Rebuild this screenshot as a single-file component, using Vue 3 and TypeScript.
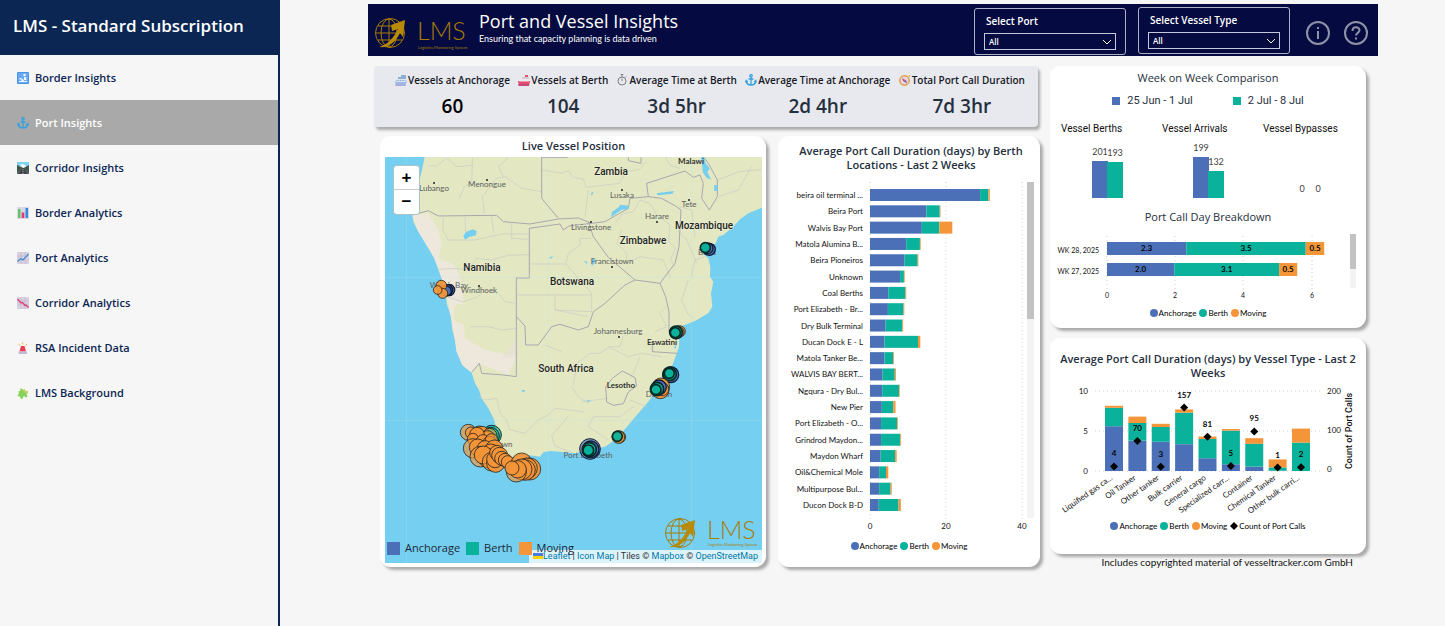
<script setup lang="ts">
import { computed, ref } from 'vue'

interface Stack { name: string; parts: number[] }
interface TypeStack extends Stack { calls: number }
interface Marker { x: number; y: number; r: number; kind: 'anchorage' | 'berth' | 'moving'; soft?: boolean }

const kinds = ['anchorage', 'berth', 'moving'] as const
const legend = [
  { label: 'Anchorage', kind: 'anchorage' },
  { label: 'Berth', kind: 'berth' },
  { label: 'Moving', kind: 'moving' },
]

const nav = [
  { label: 'Border Insights', icon: 'passport' },
  { label: 'Port Insights', icon: 'anchor' },
  { label: 'Corridor Insights', icon: 'road' },
  { label: 'Border Analytics', icon: 'bars' },
  { label: 'Port Analytics', icon: 'up' },
  { label: 'Corridor Analytics', icon: 'down' },
  { label: 'RSA Incident Data', icon: 'siren' },
  { label: 'LMS Background', icon: 'puzzle' },
]
const active = ref('Port Insights')

const kpis = [
  { label: 'Vessels at Anchorage', value: '60', icon: 'ship' },
  { label: 'Vessels at Berth', value: '104', icon: 'redship' },
  { label: 'Average Time at Berth', value: '3d 5hr', icon: 'watch' },
  { label: 'Average Time at Anchorage', value: '2d 4hr', icon: 'anchor' },
  { label: 'Total Port Call Duration', value: '7d 3hr', icon: 'compass' },
]

const berths: Stack[] = [
  { name: 'beira oil terminal ...', parts: [28.9, 2.2, 0.35] },
  { name: 'Beira Port', parts: [14.8, 3.5, 0.2] },
  { name: 'Walvis Bay Port', parts: [13.6, 4.6, 3.4] },
  { name: 'Matola Alumina B...', parts: [9.5, 3.6, 0.2] },
  { name: 'Beira Pioneiros', parts: [9.1, 3.4, 0.2] },
  { name: 'Unknown', parts: [7.9, 1, 0.2] },
  { name: 'Coal Berths', parts: [4.8, 4.5, 0.2] },
  { name: 'Port Elizabeth - Br...', parts: [4.7, 4.1, 0.2] },
  { name: 'Dry Bulk Terminal', parts: [4.1, 4.4, 0.2] },
  { name: 'Ducan Dock E - L', parts: [3.8, 8.8, 0.6] },
  { name: 'Matola Tanker Be...', parts: [3.8, 2.3, 0.2] },
  { name: 'WALVIS BAY BERT...', parts: [3.3, 3.2, 0.3] },
  { name: 'Ngqura - Dry Bul...', parts: [3.2, 4.4, 0.2] },
  { name: 'New Pier', parts: [3.1, 3, 0.6] },
  { name: 'Port Elizabeth - O...', parts: [2.9, 4.2, 0.2] },
  { name: 'Grindrod Maydon...', parts: [2.9, 5, 0.2] },
  { name: 'Maydon Wharf', parts: [2.8, 3.8, 0.4] },
  { name: 'Oil&Chemical Mole', parts: [2.4, 1.8, 0.6] },
  { name: 'Multipurpose Bul...', parts: [2.4, 3, 0.3] },
  { name: 'Ducon Dock B-D', parts: [2.3, 5.2, 0.6] },
]

const weeks: Stack[] = [
  { name: 'WK 28, 2025', parts: [2.32, 3.5, 0.54] },
  { name: 'WK 27, 2025', parts: [1.97, 3.07, 0.53] },
]

const types: TypeStack[] = [
  { name: 'Liquified gas ca...', parts: [5.6, 2.3, 0.25], calls: 4 },
  { name: 'Oil Tanker', parts: [3.8, 2.2, 0.8], calls: 70 },
  { name: 'Other tanker', parts: [3.65, 1.85, 0.4], calls: 3 },
  { name: 'Bulk carrier', parts: [3.35, 3.95, 0.4], calls: 157 },
  { name: 'General cargo', parts: [1.6, 2.4, 0.3], calls: 81 },
  { name: 'Specialized carr...', parts: [0.85, 4.2, 0.2], calls: 5 },
  { name: 'Container', parts: [0.55, 2.85, 0.7], calls: 95 },
  { name: 'Chemical Tanker', parts: [0.05, 0.4, 1], calls: 1 },
  { name: 'Other bulk carri...', parts: [0, 3.55, 1.75], calls: 2 },
]

const comparison = [
  { title: 'Vessel Berths', x: 11, bars: [{ x: 42, v: 201, h: 37 }, { x: 57, v: 193, h: 36 }] },
  { title: 'Vessel Arrivals', x: 112, bars: [{ x: 143, v: 199, h: 41 }, { x: 158, v: 132, h: 27 }] },
  { title: 'Vessel Bypasses', x: 213, bars: [{ x: 244, v: 0, h: 0 }, { x: 260, v: 0, h: 0 }] },
]

function segments(parts: number[], scale: number) {
  let start = 0
  return parts.map((part, i) => {
    const seg = { start: start * scale, size: part * scale, kind: kinds[i] }
    start += part
    return seg
  })
}

const berthRows = computed(() => berths.map((b, i) => ({ name: b.name, mid: 15 + (i * 310) / 19, segs: segments(b.parts, 3.81) })))
const weekRows = computed(() => weeks.map((w, i) => ({ name: w.name, top: 10 + i * 21, segs: segments(w.parts, 34.15) })))
const weekValues = [['2.3', '3.5', '0.5'], ['2.0', '3.1', '0.5']]
const typeCols = computed(() => types.map((t, i) => ({
  name: t.name, calls: t.calls, x: 55 + (i * 187) / 8, dot: 83 - t.calls * 0.385, segs: segments(t.parts, 8),
})))

const markers: Marker[] = [
  { x: 1003, y: 358, r: 18, kind: 'anchorage' }, { x: 998, y: 355, r: 16, kind: 'anchorage' }, { x: 991, y: 353, r: 15, kind: 'berth' },
  { x: 222, y: 480, r: 17, kind: 'anchorage' }, { x: 217, y: 480, r: 16, kind: 'anchorage' }, { x: 214, y: 483, r: 15, kind: 'anchorage' },
  { x: 199, y: 467, r: 16, kind: 'moving' }, { x: 203, y: 490, r: 15, kind: 'moving' }, { x: 188, y: 480, r: 13, kind: 'moving' },
  { x: 914, y: 604, r: 17, kind: 'moving' }, { x: 909, y: 606, r: 18, kind: 'moving' }, { x: 903, y: 607, r: 19, kind: 'berth' }, { x: 901, y: 608, r: 15, kind: 'berth' },
  { x: 887, y: 734, r: 24, kind: 'anchorage' }, { x: 884, y: 732, r: 20, kind: 'berth' }, { x: 883, y: 730, r: 15, kind: 'berth' },
  { x: 858, y: 770, r: 26, kind: 'moving' }, { x: 856, y: 780, r: 26, kind: 'moving' }, { x: 862, y: 778, r: 19, kind: 'moving' },
  { x: 852, y: 772, r: 22, kind: 'anchorage' }, { x: 846, y: 777, r: 20, kind: 'berth' }, { x: 843, y: 779, r: 15, kind: 'berth' },
  { x: 734, y: 921, r: 18, kind: 'moving' }, { x: 730, y: 921, r: 19, kind: 'moving' }, { x: 727, y: 919, r: 15, kind: 'berth' },
  { x: 645, y: 957, r: 31, kind: 'anchorage', soft: true }, { x: 647, y: 958, r: 25, kind: 'anchorage' }, { x: 643, y: 959, r: 21, kind: 'berth' }, { x: 640, y: 961, r: 16, kind: 'berth' },
  { x: 350, y: 915, r: 29, kind: 'berth', soft: true }, { x: 347, y: 918, r: 26, kind: 'berth', soft: true },
  { x: 280, y: 907, r: 24, kind: 'moving', soft: true }, { x: 313, y: 912, r: 24, kind: 'moving' }, { x: 321, y: 910, r: 21, kind: 'moving' },
  { x: 344, y: 917, r: 22, kind: 'moving', soft: true }, { x: 338, y: 922, r: 20, kind: 'moving', soft: true },
  { x: 288, y: 908, r: 17, kind: 'moving' }, { x: 306, y: 914, r: 22, kind: 'moving' }, { x: 294, y: 927, r: 17, kind: 'moving' },
  { x: 324, y: 934, r: 20, kind: 'moving' }, { x: 344, y: 940, r: 21, kind: 'moving', soft: true }, { x: 350, y: 930, r: 19, kind: 'moving', soft: true },
  { x: 294, y: 955, r: 29, kind: 'moving', soft: true }, { x: 308, y: 952, r: 25, kind: 'moving' }, { x: 330, y: 955, r: 23, kind: 'moving' },
  { x: 358, y: 955, r: 25, kind: 'moving' }, { x: 348, y: 970, r: 28, kind: 'moving' }, { x: 316, y: 980, r: 31, kind: 'moving', soft: true },
  { x: 340, y: 985, r: 29, kind: 'moving' }, { x: 325, y: 975, r: 27, kind: 'moving' }, { x: 350, y: 995, r: 28, kind: 'moving', soft: true },
  { x: 362, y: 1000, r: 27, kind: 'moving' }, { x: 360, y: 988, r: 25, kind: 'moving' }, { x: 366, y: 968, r: 22, kind: 'moving' },
  { x: 374, y: 976, r: 24, kind: 'moving' }, { x: 380, y: 985, r: 21, kind: 'moving' }, { x: 390, y: 990, r: 20, kind: 'moving' }, { x: 398, y: 996, r: 19, kind: 'moving' },
  { x: 440, y: 1000, r: 31, kind: 'moving' }, { x: 464, y: 1017, r: 33, kind: 'moving' }, { x: 456, y: 1015, r: 31, kind: 'moving' },
  { x: 450, y: 1020, r: 31, kind: 'moving' }, { x: 440, y: 1018, r: 31, kind: 'moving' }, { x: 424, y: 1026, r: 30, kind: 'moving', soft: true },
  { x: 428, y: 1018, r: 26, kind: 'moving' }, { x: 411, y: 1014, r: 21, kind: 'moving' },
]

const countries = [
  { name: 'Zambia', x: 226, y: 18 }, { name: 'Mozambique', x: 319, y: 72 }, { name: 'Zimbabwe', x: 258, y: 87 },
  { name: 'Namibia', x: 97, y: 114 }, { name: 'Botswana', x: 187, y: 128 }, { name: 'South Africa', x: 181, y: 215 },
]
const towns = [
  { name: 'Lubango', x: 49, y: 34, dx: 49, dy: 26 }, { name: 'Menongue', x: 102, y: 30, dx: 102, dy: 23 },
  { name: 'Lusaka', x: 237, y: 41, dx: 237, dy: 33 }, { name: 'Tete', x: 304, y: 50, dx: 304, dy: 43 },
  { name: 'Harare', x: 272, y: 62, dx: 272, dy: 65 }, { name: 'Livingstone', x: 206, y: 73, dx: 206, dy: 65 },
  { name: 'Francistown', x: 227, y: 107, dx: 227, dy: 110 }, { name: 'Windhoek', x: 94, y: 136, dx: 94, dy: 129 },
  { name: 'Johannesburg', x: 233, y: 177, dx: 234, dy: 180 },
]
</script>

<template>
  <div class="app">
    <svg class="defs" aria-hidden="true">
      <symbol id="passport" viewBox="0 0 12 12"><rect width="12" height="12" rx="1" fill="#4b94ec" /><path d="M1 1h10v10H1z" fill="#68a9f3" /><circle cx="7.5" cy="3" r="1.2" fill="#fff" /><path d="M7 5h2l.5 3H7zM2 9h2l1-2h1l1 2h3v1H2zM2.500 6h2v1.500h-2z" fill="#f1f7ff" /></symbol>
      <symbol id="anchor" viewBox="0 0 12 12"><g fill="none" stroke="#35a3df" stroke-width="1.3"><circle cx="6" cy="1.800" r="1.200" /><path d="M6 3.200V11M3.500 5h5M1 7c.5 2.500 2.500 4 5 4s4.500-1.500 5-4M.5 8.500 1.200 6.500l1.600 1.500M11.500 8.500l-.7-2-1.600 1.500" /></g></symbol>
      <symbol id="road" viewBox="0 0 12 12"><path d="M0 0h12v12H0z" fill="#67756a" /><path d="M0 0h12v4L8 5 6 4 4 5 0 3z" fill="#7ed3f2" /><path d="M3 3l2-1 3 1 1 2-3 1z" fill="#fff" /><path d="M0 3l5 3-5 5zM12 3L7 6l5 5z" fill="#3b5b48" /><path d="M5 6h2l4 6H1z" fill="#46434e" /><path d="M6 7v5" stroke="#fff" stroke-width=".6" stroke-dasharray="1 1" /></symbol>
      <symbol id="bars" viewBox="0 0 12 12"><rect width="12" height="12" rx="1" fill="#dcd5e5" /><path d="M1 2h2.500v9H1z" fill="#5cc763" /><path d="M4.700 5.500h2.600V11H4.700z" fill="#e83770" /><path d="M8.500 1H11v10H8.500z" fill="#2f8edb" /></symbol>
      <symbol id="up" viewBox="0 0 12 12"><rect width="12" height="12" rx="1" fill="#d8cfe0" /><path d="M0 4h12M0 8h12M4 0v12M8 0v12" stroke="#beb2ca" stroke-width=".5" /><path d="M.5 9.500 4 6.500 6 8l5.500-6" fill="none" stroke="#3b8cd0" stroke-width="1.200" /></symbol>
      <symbol id="down" viewBox="0 0 12 12"><rect width="12" height="12" rx="1" fill="#d8cfe0" /><path d="M0 4h12M0 8h12M4 0v12M8 0v12" stroke="#beb2ca" stroke-width=".5" /><path d="M.5 2 4 6l1.500-.5L8 8.500l1-.5 2.500 2.500" fill="none" stroke="#e0386e" stroke-width="1.200" /></symbol>
      <symbol id="siren" viewBox="0 0 12 12"><path d="M2.500 9.500 4 4h3.500L9 9.500z" fill="#ef3b55" /><path d="M1.500 9.500h8.500V12H1.500z" fill="#c1bdd0" /><path d="M5.700.3v2M1.500 2l1.600 1.500M10 2 8.500 3.500" stroke="#f6b73c" stroke-width="1" /></symbol>
      <symbol id="puzzle" viewBox="0 0 12 12"><g transform="rotate(-20 6 6)"><path d="M2 3h2.500C3.500 .5 7.500 .5 6.700 3H9v2.500C11.800 4.500 11.800 8.500 9 7.800V11H6.700C7.300 8.700 4 8.700 4.500 11H2V8C-.5 8.800-.5 4.800 2 5.500z" fill="#86d25c" /><path d="M6.700 3H9v2.500C11.800 4.500 11.800 8.500 9 7.800z" fill="#c3d356" /></g></symbol>
      <symbol id="ship" viewBox="0 0 12 12"><path d="M0 7h12l-2 5H1z" fill="#9fb9e4" /><path d="M1 5h10v3H1z" fill="#dbe4f3" /><path d="M3 3h8v2H3zM6 1h5v2H6z" fill="#8dafcf" /><path d="M1.500 6.500h9" stroke="#608ac0" stroke-width=".7" stroke-dasharray="1 .7" /><path d="M0 11h11" stroke="#b2a0db" /></symbol>
      <symbol id="redship" viewBox="0 0 12 12"><path d="M0 7h12l-1 5H1z" fill="#e24a70" /><path d="M2 5h9v2.500H1z" fill="#eee8f0" /><path d="M4 3h7v2H4z" fill="#d7c8d8" /><path d="M7 1h3v2H7z" fill="#dc5674" /><path d="M0 11h11" stroke="#a94a79" /></symbol>
      <symbol id="watch" viewBox="0 0 12 12"><g fill="none" stroke="#555" stroke-width=".7"><circle cx="6" cy="7" r="4" /><path d="M6 7V4.500M6 3V.8M4.700.6h2.600M9.300 3.500l1-1" /></g></symbol>
      <symbol id="compass" viewBox="0 0 12 12"><circle cx="5.500" cy="6.500" r="4.700" fill="#e4d7e4" stroke="#e79c3d" stroke-width="1.400" /><path d="m3 4 4 2.500 1 3L4 7z" fill="#d94a67" /><path d="m5 7 2-1 1 3.500z" fill="#5886bf" /><path d="m9 2 2-1v2z" fill="#e79c3d" /></symbol>
      <symbol id="globe" viewBox="0 0 34 34">
        <g fill="none" stroke="#a87c06" stroke-width="1"><circle cx="16" cy="17" r="14.500" /><ellipse cx="15" cy="17" rx="8" ry="14" /><path d="M15 3v28M4 10h22M2 17h28M4 24h24" /></g>
        <path d="M5 31C13 29 19 23 24 13L18 15 17 9 31 4 29 21 26 17C21 27 14 32 5 31z" fill="#b98a06" />
      </symbol>
    </svg>

    <aside class="sidebar">
      <h1>LMS - Standard Subscription</h1>
      <nav>
        <a v-for="item in nav" :key="item.label" href="#" :class="{ active: item.label === active }" @click.prevent="active = item.label">
          <svg class="nav-icon"><use :href="'#' + item.icon" /></svg>{{ item.label }}
        </a>
      </nav>
    </aside>

    <main>
      <header>
        <svg class="brand" viewBox="0 0 96 34" role="img" aria-label="LMS logo">
          <use href="#globe" width="34" height="34" />
          <text class="mark" x="43" y="24">LMS</text><text class="tagline" x="44" y="33">Logistics Monitoring System</text>
        </svg>
        <div class="heading">
          <h2>Port and Vessel Insights</h2>
          <p>Ensuring that capacity planning is data driven</p>
        </div>
        <div class="slicer">
          <label for="port">Select Port</label>
          <div class="pick">
            <select id="port"><option>All</option></select>
            <svg viewBox="0 0 10 6"><path d="m1 1 4 4 4-4" /></svg>
          </div>
        </div>
        <div class="slicer raised">
          <label for="type">Select Vessel Type</label>
          <div class="pick">
            <select id="type"><option>All</option></select>
            <svg viewBox="0 0 10 6"><path d="m1 1 4 4 4-4" /></svg>
          </div>
        </div>
        <button class="round" aria-label="Information">
          <svg viewBox="0 0 24 24"><circle cx="12" cy="12" r="11" /><path d="M12 10v8M12 6v2" /></svg>
        </button>
        <button class="round" aria-label="Help">
          <svg viewBox="0 0 24 24"><circle cx="12" cy="12" r="11" /><path d="M8.500 10C8.500 4.800 15.500 5.300 15.500 9.300c0 2.700-3.500 2.400-3.500 5.200M12 16.500v2" /></svg>
        </button>
      </header>

      <div class="board">
        <div class="left">
          <section class="kpis">
            <div v-for="k in kpis" :key="k.label" class="kpi">
              <h3><svg class="kpi-icon"><use :href="'#' + k.icon" /></svg>{{ k.label }}</h3>
              <strong :class="{ black: k.value === '60' }">{{ k.value }}</strong>
            </div>
          </section>

          <div class="pair">
            <section class="card map-card">
              <h3>Live Vessel Position</h3>
              <div class="map">
                <svg class="terrain" viewBox="0 0 377 406" role="img" aria-label="Map of southern Africa">
                  <rect width="377" height="406" fill="#75cff0" />
                  <g transform="translate(-10 -27) scale(.33333)">
                    <path d="M150 75 143 110 136 140 130 180V250L112 255 115 275 130 305 150 330 160 350 178 385 190 415 205 445 212 480 215 520 228 560 232 600 240 630 245 665 262 705 290 728 300 760 312 780 320 805 340 835 358 870 362 890 357 905 372 920 370 960 390 965 405 985 440 972 495 980 505 967 525 963 570 967 600 970 640 960 690 950 720 930 750 897 790 850 820 815 850 770 880 735 900 685 912 650 915 590 960 573 1000 550 1012 530 1008 490 1015 455 1005 440 1006 410 1000 385 985 372 1000 358 1022 340 1030 320 1045 315 1075 290 1095 268 1120 250 1165 232V75z" fill="#e3e8c2" />
                    <path d="M112 255 160 252 190 300 200 345 190 385 238 405 255 440 266 520 240 525 235 570 266 585 270 625 330 660 424 680 400 735 310 700 290 728 262 705 245 665 240 630 228 560 212 480 178 385 130 305z" fill="#eee8dc" />
                    <path d="m375 690 48-60v50z" fill="#e8dfdb" opacity=".6" />
                    <g fill="none" stroke="#c9cac5" stroke-width="2" stroke-linejoin="round">
                      <path d="M160 107 185 108 215 84 245 110 292 106V82M292 106 290 155 268 170 253 205M322 200 328 250M322 200 365 145 392 140 440 175 500 185M385 140l-15-30 30-28M500 120l60 10 20-8 15 20 30 5 8 25 100-12 20-35 40-6 20-24M640 180l-10 80M870 80l15 25 30 10M1030 150l60-25 70-6M1030 200l60-20 40-70" />
                      <path d="M205 262 203 300 220 330 300 330 345 320 380 312H460M270 260l2 50M350 258l6 52M410 280v45l50 3M190 418 240 415 280 420 305 385 350 390 400 376 463 374M420 520 390 515 370 490 330 480 310 500 265 516 215 500M285 590 340 590 380 600 424 595M425 495H650M463 402H572M572 402 580 370 615 345V325H648M572 402 650 490V545L540 540V497M540 540 640 560M720 280l25-30 30-5 20-35 30 10 20 35 40 30-4 50 20 20-15 35 15 20M740 300l-15 40 30 30 0 30 40-20 70 10 20 50M905 300l30 30 30 70M912 230 950 240 960 320M940 450l-20 60 20 45 15 10M950 440l10-50 30-10" />
                      <path d="M310 800l20 10 35-5 10 45 20 20 10 30 45 10 40-40 30-15 20-20 85 10M580 858l-50 60 10 30 55 22M590 770l20 30 30 20M595 765l10-65 40-30 30 0 30-20 30 0 10-30 40-20M620 815l80-10M700 930l-60-40 15-30 80 0 40-30M765 810l50 20M840 605l35-15-20-40 20-20M700 650l60 30 40-10 60 10M795 680l-20 50-10 10M560 665l-50-20" />
                    </g>
                    <g fill="none" stroke="#a7a7b0" stroke-width="3" stroke-linejoin="round">
                      <path d="M112 255 160 242 190 258 365 256 385 275 465 282 550 267 610 264 650 280 690 275 760 235 765 205 820 200 860 205 905 230 918 240 912 350 900 400 855 460 780 450 700 382 655 320 640 275M578 82H500V205L550 265M462 295 555 282 565 300 582 288 648 280M463 295V444H424V740M424 740 385 735 320 730 313 700 290 727M424 560 450 588 452 645 490 645 530 590 555 583 610 600 640 590 655 545 690 520 750 465 780 450M855 460 872 500 882 545 882 605 895 605" />
                      <path d="M815 160 930 123 955 142 975 135 985 160 980 205 1003 240 1027 200V150L1000 100 985 80M815 160 820 200M760 82v10l38 8V82M832 635v30l75 5M692 770l20-25 30-22 38 20 5 25-25 18-15 35-30 5-20-10z" />
                    </g>
                    <g fill="#75cff0"><path d="M978 80h9l5 20 12 15-7 12 12 22-14-6-11-15zM708 262l3-16 20-14 5-8 25 3-1 10-20 2-18 12zM265 318l8-12 20-8 12 5-2 13-20 5-13 8zM845 190l52-7-4 8-45 5zM1018 165h9v18h-10zM648 188l8-3-6 13zM523 382l12-4-8 9zM650 386h11l-2 14-9 9zM627 393l10 2-2 7zM440 780h10v5h-10zM635 810l15 3-12 3zM897 650l7-5-3 14z" /></g>
                    <path d="M30 442H1161M30 871H1161M95 81V1300M520 81V1300M950 81V1300" stroke="#b9e4f2" opacity=".4" stroke-width="2" />
                  </g>
                  <g text-anchor="middle">
                    <g class="town">
                      <text v-for="t in towns" :key="t.name" :x="t.x" :y="t.y">{{ t.name }}</text>
                      <text x="64" y="131">Walvis Bay</text><text x="322" y="98">Beira</text><text x="274" y="240">Durban</text>
                      <text x="108" y="290">Cape Town</text><text x="203" y="301">Port Elizabeth</text>
                      <circle v-for="t in towns" :key="'dot' + t.name" :cx="t.dx" :cy="t.dy" r="1" />
                    </g>
                    <g class="small-country"><text x="306" y="7">Malawi</text><text x="277" y="188">Eswatini</text><text x="236" y="231">Lesotho</text></g>
                    <g class="country"><text v-for="c in countries" :key="c.name" :x="c.x" :y="c.y">{{ c.name }}</text></g>
                  </g>
                  <g transform="translate(-10 -27) scale(.33333)">
                    <circle v-for="(m, i) in markers" :key="i" :cx="m.x" :cy="m.y" :r="m.r" :class="['marker', m.kind, { soft: m.soft }]" />
                  </g>
                </svg>
                <div class="zoomer"><button aria-label="Zoom in">+</button><button aria-label="Zoom out">−</button></div>
                <svg class="map-brand" viewBox="0 0 96 34" role="img" aria-label="LMS logo">
                  <use href="#globe" width="34" height="34" />
                  <text class="mark" x="43" y="23">LMS</text><text class="tagline" x="44" y="30">Logistics Monitoring System</text>
                </svg>
                <div class="credit">
                  <svg viewBox="0 0 10 6"><path d="M0 0h10v3H0z" fill="#4c7be1" /><path d="M0 3h10v3H0z" fill="#ffd500" /></svg>
                  <a href="#">Leaflet</a> | <a href="#">Icon Map</a> | Tiles © <a href="#">Mapbox</a> © <a href="#">OpenStreetMap</a>
                </div>
                <ul class="map-legend"><li v-for="l in legend" :key="l.kind"><i :class="l.kind" />{{ l.label }}</li></ul>
              </div>
            </section>

            <section class="card berth-card">
              <h3>Average Port Call Duration (days) by Berth Locations - Last 2 Weeks</h3>
              <svg class="chart" viewBox="0 0 262 352" role="img" aria-label="Average port call duration by berth">
                <path class="grid" d="M92 2V341M168 2V341M244 2V341" />
                <g v-for="row in berthRows" :key="row.name">
                  <text x="85" :y="row.mid + 3" text-anchor="end">{{ row.name }}</text>
                  <rect v-for="s in row.segs" :key="s.kind" :x="92 + s.start" :y="row.mid - 6" :width="s.size" height="12" :class="s.kind" />
                </g>
                <g text-anchor="middle"><text x="92" y="349">0</text><text x="168" y="349">20</text><text x="244" y="349">40</text></g>
                <rect x="249" y="2" width="7" height="336" fill="#f3f3f3" /><rect x="249" y="2" width="7" height="137" fill="#c2c2c2" />
              </svg>
              <ul class="legend"><li v-for="l in legend" :key="l.kind"><i :class="l.kind" />{{ l.label }}</li></ul>
            </section>
          </div>
        </div>

        <div class="right">
          <section class="card week-card">
            <h3>Week on Week Comparison</h3>
            <ul class="periods"><li><i class="anchorage" />25 Jun - 1 Jul</li><li><i class="berth" />2 Jul - 8 Jul</li></ul>
            <svg class="chart" viewBox="0 0 316 82" role="img" aria-label="Berths, arrivals and bypasses by week">
              <g v-for="c in comparison" :key="c.title">
                <text class="sub" :x="c.x" y="14">{{ c.title }}</text>
                <g v-for="(b, i) in c.bars" :key="i">
                  <rect :x="b.x" :y="80 - b.h" width="16" :height="b.h" :class="kinds[i]" />
                  <text class="count" :x="b.x + 8" :y="74 - b.h" text-anchor="middle">{{ b.v }}</text>
                </g>
              </g>
            </svg>
            <h3 class="second">Port Call Day Breakdown</h3>
            <svg class="chart" viewBox="0 0 316 72" role="img" aria-label="Port call day breakdown">
              <path class="grid" d="M57 4V58M125 4V58M193 4V58M262 4V58" />
              <g v-for="(row, r) in weekRows" :key="row.name">
                <text class="tick" x="49" :y="row.top + 11" text-anchor="end">{{ row.name }}</text>
                <g v-for="(s, i) in row.segs" :key="s.kind">
                  <rect :x="57 + s.start" :y="row.top" :width="s.size" height="13" :class="s.kind" />
                  <text class="value" :x="57 + s.start + s.size / 2" :y="row.top + 9" text-anchor="middle">{{ weekValues[r][i] }}</text>
                </g>
              </g>
              <g class="tick" text-anchor="middle"><text x="57" y="66">0</text><text x="125" y="66">2</text><text x="193" y="66">4</text><text x="262" y="66">6</text></g>
              <rect x="300" y="2" width="6" height="54" fill="#f3f3f3" /><rect x="300" y="2" width="6" height="35" fill="#c2c2c2" />
            </svg>
            <ul class="legend"><li v-for="l in legend" :key="l.kind"><i :class="l.kind" />{{ l.label }}</li></ul>
          </section>

          <section class="card type-card">
            <h3>Average Port Call Duration (days) by Vessel Type - Last 2 Weeks</h3>
            <svg class="chart" viewBox="0 0 316 134" role="img" aria-label="Average port call duration by vessel type">
              <path class="grid" d="M45 6H272M45 46H272M45 86H272" />
              <g text-anchor="end"><text x="38" y="9">10</text><text x="38" y="49">5</text><text x="38" y="89">0</text></g>
              <text x="277" y="9">200</text><text x="277" y="48">100</text><text x="277" y="87">0</text>
              <text class="axis" transform="translate(302 46) rotate(-90)" text-anchor="middle">Count of Port Calls</text>
              <g v-for="c in typeCols" :key="c.name">
                <rect v-for="s in c.segs" :key="s.kind" :x="c.x" :y="86 - s.start - s.size" width="18" :height="s.size" :class="s.kind" />
                <path class="point" :transform="`translate(${c.x + 9} ${c.dot})`" d="M0-4 4 0 0 4-4 0z" />
                <text class="value" :x="c.x + 9" :y="c.dot - 10" text-anchor="middle">{{ c.calls }}</text>
                <text :transform="`translate(${c.x + 8} 94) rotate(-35)`" text-anchor="end">{{ c.name }}</text>
              </g>
            </svg>
            <ul class="legend">
              <li v-for="l in legend" :key="l.kind"><i :class="l.kind" />{{ l.label }}</li>
              <li><svg class="diamond" viewBox="0 0 10 10"><path d="M5 0 10 5 5 10 0 5z" /></svg>Count of Port Calls</li>
            </ul>
          </section>
          <p class="notice">Includes copyrighted material of vesseltracker.com GmbH</p>
        </div>
      </div>
    </main>
  </div>
</template>

<style>
body { margin: 0; background: #f6f6f6; }
</style>

<style scoped>
* { box-sizing: border-box; }
.app { display: flex; min-height: 100vh; font-family: "Open Sans", "Noto Sans", sans-serif; color: #252f3d; background: #f6f6f6; }
.defs { position: absolute; width: 0; height: 0; }
h1, h2, h3, p, ul { margin: 0; padding: 0; font-weight: 500; }
ul { list-style: none; }
.sidebar { width: 280px; flex: none; border-right: 2px solid #0c2654; }
.sidebar h1 { height: 55px; padding-left: 13px; background: #0c2654; color: #fff; font-size: 17px; line-height: 52px; font-weight: 600; white-space: nowrap; }
nav { display: flex; flex-direction: column; }
nav a { display: flex; align-items: center; gap: 6px; height: 45px; padding-left: 17px; color: #0c2654; font-size: 11px; font-weight: 600; text-decoration: none; }
nav a.active { background: #a9a9a9; color: #fff; }
.nav-icon { width: 12px; height: 12px; }
main { flex: 1; min-width: 0; padding: 4px 67px 0 88px; }
header { display: flex; align-items: center; height: 52px; padding: 0 10px 0 6px; background: #050b40; color: #fff; }
.brand { width: 96px; height: 34px; margin-top: 6px; overflow: visible; }
.mark { font: 300 25px Lato, sans-serif; fill: #a87c06; }
.tagline { font: 4px Lato, sans-serif; fill: #a87c06; }
.heading { flex: 1; margin-left: 9px; align-self: flex-start; }
.heading h2 { font-size: 18px; line-height: 24px; margin-top: 5px; font-weight: 400; }
.heading p { font: 9px/11px Lato, sans-serif; }
.slicer { width: 152px; height: 47px; margin-right: 12px; padding: 5px 9px; border: 1px solid #adb1c6; border-radius: 3px; margin-top: 2px; }
.slicer.raised { margin-top: 0; margin-right: 16px; }
.slicer label { display: block; padding-left: 2px; font-size: 10px; line-height: 14px; font-weight: 600; }
.pick { position: relative; margin-top: 5px; }
.pick select { display: block; width: 100%; height: 17px; padding: 0 4px; border: 1px solid #c5c8d8; border-radius: 0; background: transparent; color: #fff; font: 600 8px "Open Sans", sans-serif; appearance: none; }
.pick svg { position: absolute; right: 4px; top: 6px; width: 10px; height: 6px; fill: none; stroke: #fff; pointer-events: none; }
.round { width: 24px; height: 24px; margin-left: 14px; padding: 0; border: 0; background: none; margin-top: 6px; }
.slicer + .round { margin-left: 0; }
.round svg { display: block; width: 24px; height: 24px; fill: none; stroke: #8f93a7; stroke-width: 2; }
.board { display: grid; grid-template-columns: 666fr 316fr; gap: 10px; padding: 10px 12px 0 6px; }
.left { min-width: 0; }
.kpis { display: flex; justify-content: space-between; height: 61px; margin: 0 2px 9px 0; padding: 7px 13px 0 21px; border-radius: 4px; background: #e8e9ef; box-shadow: 2px 3px 3px #aaa; }
.kpi { text-align: center; }
.kpi h3 { display: flex; align-items: center; justify-content: center; gap: 1px; font-size: 10px; line-height: 14px; font-weight: 600; color: #15181f; white-space: nowrap; }
.kpi-icon { width: 12px; height: 12px; }
.kpi strong { display: block; font-size: 19px; line-height: 38px; font-weight: 600; }
.kpi strong.black { color: #000; }
.pair { display: grid; grid-template-columns: 386fr 262fr; gap: 12px; padding-left: 6px; }
.card { border-radius: 11px; background: #fff; box-shadow: 3px 3px 3px #aaa; }
.card h3 { text-align: center; font-size: 11px; line-height: 14px; font-weight: 600; }
.chart { display: block; width: 100%; height: auto; font: 8px Lato, sans-serif; fill: #111; }
.map-card { padding: 3px 4px 4px 5px; }
.map-card h3 { height: 18px; }
.map { position: relative; }
.terrain { display: block; width: 100%; height: auto; }
.town { font: 8px Lato, sans-serif; fill: #5c605e; }
.town circle { fill: #222; }
.small-country { font: 700 8px Lato, sans-serif; fill: #333; }
.country { font: 500 10px Roboto, sans-serif; fill: #222; stroke: #edf0d6; stroke-width: 1px; paint-order: stroke; }
.marker { stroke: #191919; stroke-width: 3px; stroke-opacity: .75; fill-opacity: .94; }
.marker.berth { stroke: #062b26; stroke-width: 5px; stroke-opacity: 1; }
.marker.anchorage { stroke: #101b36; stroke-width: 4px; stroke-opacity: 1; }
.marker.soft { fill-opacity: .65; stroke-width: 3px; }
.anchorage { fill: #4b70b8; background: #4b70b8; }
.berth { fill: #0ab29b; background: #0ab29b; }
.moving { fill: #f39538; background: #f39538; }
.zoomer { position: absolute; left: 9px; top: 9px; display: flex; flex-direction: column; width: 25px; border-radius: 3px; background: #fff; box-shadow: 0 0 0 1px #a9c5c9; }
.zoomer button { height: 24px; padding: 0; border: 0; background: none; color: #000; font: 700 17px "Liberation Sans", sans-serif; }
.zoomer button:first-child { border-bottom: 1px solid #ccc; }
.map-brand { position: absolute; right: 2px; bottom: 13px; width: 96px; height: 34px; }
.credit { position: absolute; right: 0; bottom: 0; height: 13px; padding: 0 4px; background: rgb(255 255 255 / 75%); color: #333; font: 400 9px/13px Roboto, sans-serif; white-space: nowrap; }
.credit svg { width: 10px; height: 6px; }
.credit a { color: #0078a8; text-decoration: none; }
.map-legend { position: absolute; left: 2px; bottom: 7px; display: flex; gap: 6px; font-size: 11px; line-height: 16px; color: #1b2735; }
.map-legend li { display: flex; align-items: center; gap: 5px; }
.map-legend i { width: 13px; height: 13px; }
.berth-card { padding-top: 8px; }
.berth-card h3 { width: 230px; margin: 0 auto 8px; padding-left: 4px; }
.grid { fill: none; stroke: #d0d0d0; stroke-dasharray: 1 3; }
.legend { display: flex; justify-content: center; gap: 3px; font: 8px/10px Lato, sans-serif; color: #000; }
.legend li { display: flex; align-items: center; gap: 1px; }
.legend i { width: 8px; height: 8px; border-radius: 50%; }
.berth-card .legend { margin-top: 9px; }
.diamond { width: 8px; height: 8px; }
.week-card { padding-top: 5px; height: 262px; }
.week-card h3 { font-weight: 500; }
.week-card .second { margin: 10px 0 8px; }
.periods { display: flex; justify-content: center; gap: 40px; margin: 7px 0 8px; font: 11px/18px Roboto, sans-serif; }
.periods li { display: flex; align-items: center; gap: 7px; }
.periods i { width: 8px; height: 8px; }
.sub { font: 10px Roboto, sans-serif; }
.count { font: 9px Lato, sans-serif; fill: #444; }
.tick { font-size: 7px; }
.value { font: 700 8px Lato, sans-serif; fill: #050505; }
.point { fill: #000; }
.week-card .legend { margin-top: 4px; }
.type-card { margin-top: 10px; padding-top: 14px; height: 216px; }
.type-card h3 { width: 300px; margin: 0 auto 5px; }
.type-card .legend { margin-top: 2px; }
.axis { font: 500 9px Roboto, sans-serif; fill: #111; }
.notice { margin: 1px 13px 0 0; text-align: right; font: 10px/14px Lato, sans-serif; color: #111; }
</style>
